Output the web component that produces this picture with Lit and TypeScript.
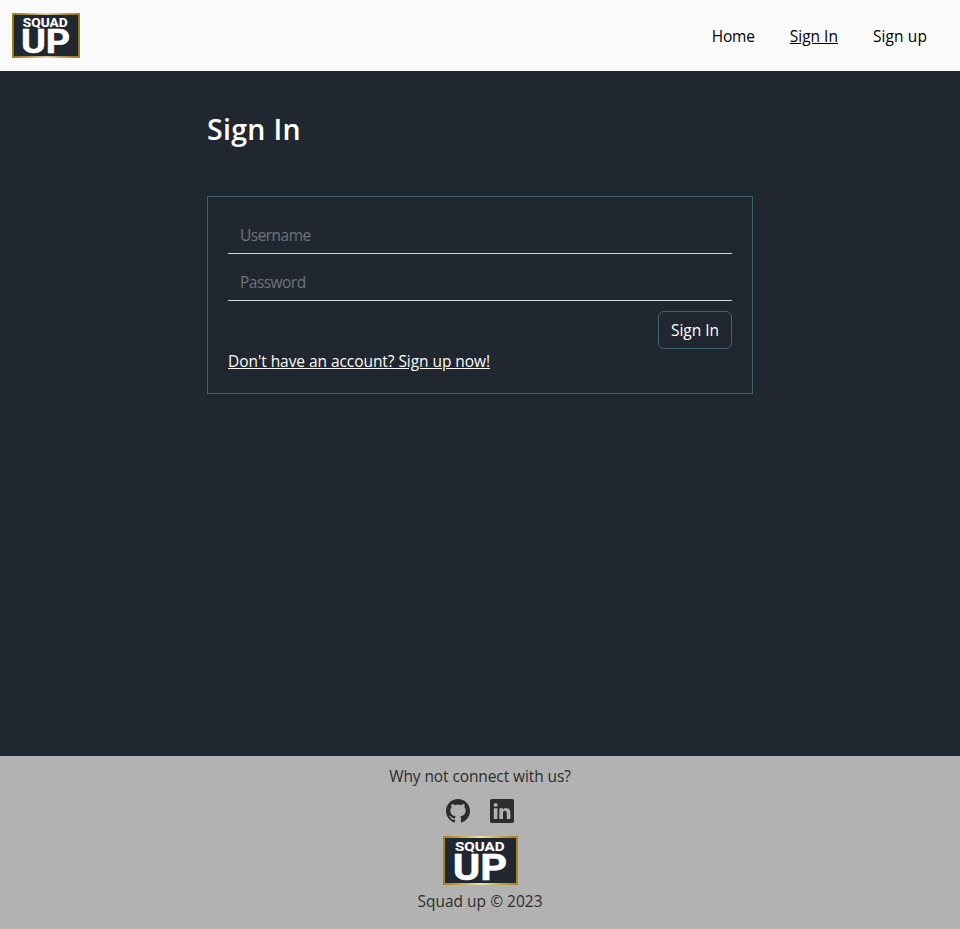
import { LitElement, html, css } from "lit";
import { customElement } from "lit/decorators.js";

@customElement("squad-logo")
class SquadLogo extends LitElement {
  static styles = css`
    :host { display: block; }
    svg { display: block; width: 100%; height: 100%; overflow: visible; }
    text { font-family: Roboto, Inter, sans-serif; font-weight: 700; fill: #fff; stroke: #fff; stroke-linejoin: round; }
    .small { font-size: 13.2px; stroke-width: 0.1px; }
    .large { font-size: 37px; stroke-width: 0.5px; }
  `;
  render() {
    return html`<svg viewBox="0 0 75 49" preserveAspectRatio="none" role="img" aria-label="Squad Up">
      <defs>
        <linearGradient id="gold">
          <stop offset="0" stop-color="#a98016" />
          <stop offset="0.2" stop-color="#c09d3c" />
          <stop offset="0.5" stop-color="#efe2ae" />
          <stop offset="0.8" stop-color="#c09d3c" />
          <stop offset="1" stop-color="#a98016" />
        </linearGradient>
      </defs>
      <rect width="75" height="49" fill="url(#gold)" />
      <rect x="2" y="2" width="71" height="45" fill="#212730" />
      <text class="small" x="12" y="14.8" textLength="49.5" lengthAdjust="spacingAndGlyphs">SQUAD</text>
      <text class="large" x="9.8" y="43.7" textLength="54.5" lengthAdjust="spacingAndGlyphs">UP</text>
    </svg>`;
  }
}

@customElement("app-root")
class AppRoot extends LitElement {
  static styles = css`
    :host {
      display: flex;
      flex-direction: column;
      height: 929px;
      background: #212730;
      color: #fafafa;
      font: 15.5px/24px "Open Sans", "Noto Sans", sans-serif;
    }
    * { box-sizing: border-box; }
    a { color: inherit; }
    header {
      display: flex;
      justify-content: space-between;
      align-items: center;
      height: 71px;
      padding: 0 33px 0 12px;
      background: #fafafa;
      color: #000;
    }
    .brand { width: 68px; height: 45px; }
    nav { display: flex; gap: 35px; }
    nav a { text-decoration: none; }
    nav .active { text-decoration: underline; }
    .home { letter-spacing: -0.2px; }
    .join { letter-spacing: 0.1px; }
    main { flex: 1; width: 546px; margin: 0 auto; padding-top: 41px; }
    h1 { margin: 0 0 50px; font-size: 28.5px; line-height: 34px; font-weight: 600; letter-spacing: 0.3px; color: #fff; }
    form { height: 198px; padding: 20px; border: 1px solid #3d656e; }
    input {
      display: block;
      width: 100%;
      height: 37px;
      margin: 0 0 10px;
      padding: 6px 12px;
      border: 0;
      border-bottom: 1px solid #ced4da;
      border-radius: 0;
      background: transparent;
      color: #fff;
      font: inherit;
      letter-spacing: -0.53px;
      outline: 0;
    }
    input::placeholder { color: #6c757d; opacity: 1; }
    .actions { display: flex; justify-content: flex-end; }
    button {
      width: 74px;
      height: 38px;
      padding: 0;
      border: 1px solid #3d656e;
      border-radius: 6px;
      background: transparent;
      color: #fff;
      font: inherit;
    }
    .signup { display: block; width: max-content; letter-spacing: -0.06px; }
    footer {
      display: flex;
      flex-direction: column;
      align-items: center;
      height: 173px;
      padding-top: 8px;
      background: #b2b2b2;
      color: #2d2d2d;
    }
    .connect { letter-spacing: -0.1px; }
    .social { display: flex; gap: 20px; margin: 11px 0 13px; }
    .social a, .social svg { display: block; width: 24px; height: 24px; fill: currentColor; }
    .mark { width: 75px; height: 49px; margin: 0 0 4px 1px; }
  `;
  render() {
    return html`
      <header>
        <squad-logo class="brand"></squad-logo>
        <nav>
          <a class="home" href="#">Home</a>
          <a class="active" href="#">Sign In</a>
          <a class="join" href="#">Sign up</a>
        </nav>
      </header>
      <main>
        <h1>Sign In</h1>
        <form>
          <input type="text" placeholder="Username" aria-label="Username" />
          <input type="password" placeholder="Password" aria-label="Password" />
          <div class="actions"><button type="button">Sign In</button></div>
          <a class="signup" href="#">Don't have an account? Sign up now!</a>
        </form>
      </main>
      <footer>
        <div class="connect">Why not connect with us?</div>
        <div class="social">
          <a href="#" aria-label="GitHub"><svg viewBox="0 0 16 16"><path d="M8 0C3.58 0 0 3.58 0 8c0 3.54 2.29 6.53 5.47 7.59.4.07.55-.17.55-.38 0-.19-.01-.82-.01-1.49-2.01.37-2.53-.49-2.69-.94-.09-.23-.48-.94-.82-1.13-.28-.15-.68-.52-.01-.53.63-.01 1.08.58 1.23.82.72 1.21 1.87.87 2.33.66.07-.52.28-.87.51-1.07-1.78-.2-3.64-.89-3.64-3.95 0-.87.31-1.59.82-2.15-.08-.2-.36-1.02.08-2.12 0 0 .67-.21 2.2.82.64-.18 1.32-.27 2-.27s1.36.09 2 .27c1.53-1.04 2.2-.82 2.2-.82.44 1.1.16 1.92.08 2.12.51.56.82 1.27.82 2.15 0 3.07-1.87 3.75-3.65 3.95.29.25.54.73.54 1.48 0 1.07-.01 1.93-.01 2.2 0 .21.15.46.55.38A8.01 8.01 0 0 0 16 8c0-4.42-3.58-8-8-8" /></svg></a>
          <a href="#" aria-label="LinkedIn"><svg viewBox="0 0 16 16"><path d="M0 1.146C0 .513.526 0 1.175 0h13.65C15.474 0 16 .513 16 1.146v13.708c0 .633-.526 1.146-1.175 1.146H1.175C.526 16 0 15.487 0 14.854zm4.943 12.248V6.169H2.542v7.225zm-1.2-8.212c.837 0 1.358-.554 1.358-1.248-.015-.709-.52-1.248-1.342-1.248S2.4 3.226 2.4 3.934c0 .694.521 1.248 1.327 1.248zm4.908 8.212V9.359c0-.216.016-.432.08-.586.173-.431.568-.878 1.232-.878.869 0 1.216.662 1.216 1.634v3.865h2.401V9.25c0-2.22-1.184-3.252-2.764-3.252-1.274 0-1.845.7-2.165 1.193v.025h-.016l.016-.025V6.169h-2.4c.03.678 0 7.225 0 7.225z" /></svg></a>
        </div>
        <squad-logo class="mark"></squad-logo>
        <div class="copy">Squad up © 2023</div>
      </footer>
    `;
  }
}
